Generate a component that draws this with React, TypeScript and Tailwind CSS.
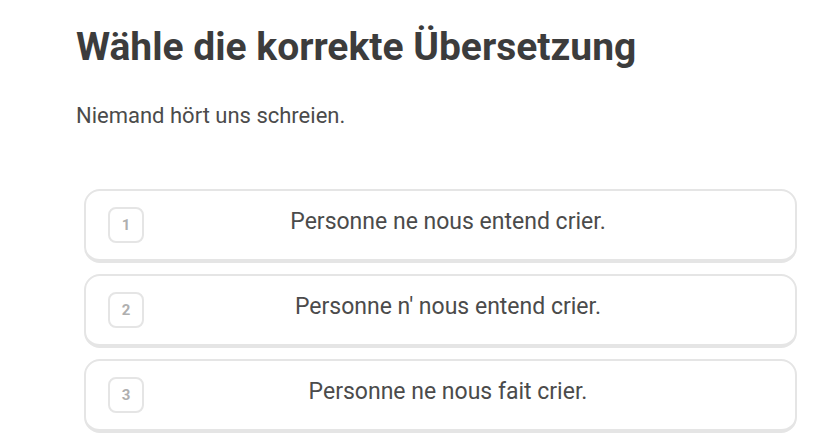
export default function App() {
  const items = [
    "Personne ne nous entend crier.",
    "Personne n' nous entend crier.",
    "Personne ne nous fait crier.",
  ];
  return (
    <div className="w-[825px] h-[446px] bg-white overflow-hidden" style={{ fontFamily: "Roboto, 'Noto Sans', sans-serif" }}>
      <div className="pl-[76px] pt-[23px]">
        <h1 className="text-[39px] leading-[48px] font-bold text-[#3c3c3c]">Wähle die korrekte Übersetzung</h1>
        <p className="mt-[31px] text-[22px] leading-[28px] text-[#4b4b4b]">Niemand hört uns schreien.</p>
      </div>
      <div className="ml-[84px] w-[713px] mt-[59px] flex flex-col gap-[11px]">
        {items.map((t, i) => (
          <div key={i} className="h-[74px] rounded-[16px] border-2 border-b-4 border-[#e5e5e5] flex items-center pl-[22px] pr-[43px]">
            <div className="w-[36px] h-[36px] shrink-0 rounded-[8px] border-2 border-[#e5e5e5] flex items-center justify-center text-[15px] font-bold text-[#afafaf]">
              {i + 1}
            </div>
            <div className="flex-1 text-center text-[23px] leading-[30px] pb-[6px] text-[#4b4b4b]">{t}</div>
          </div>
        ))}
      </div>
    </div>
  );
}
